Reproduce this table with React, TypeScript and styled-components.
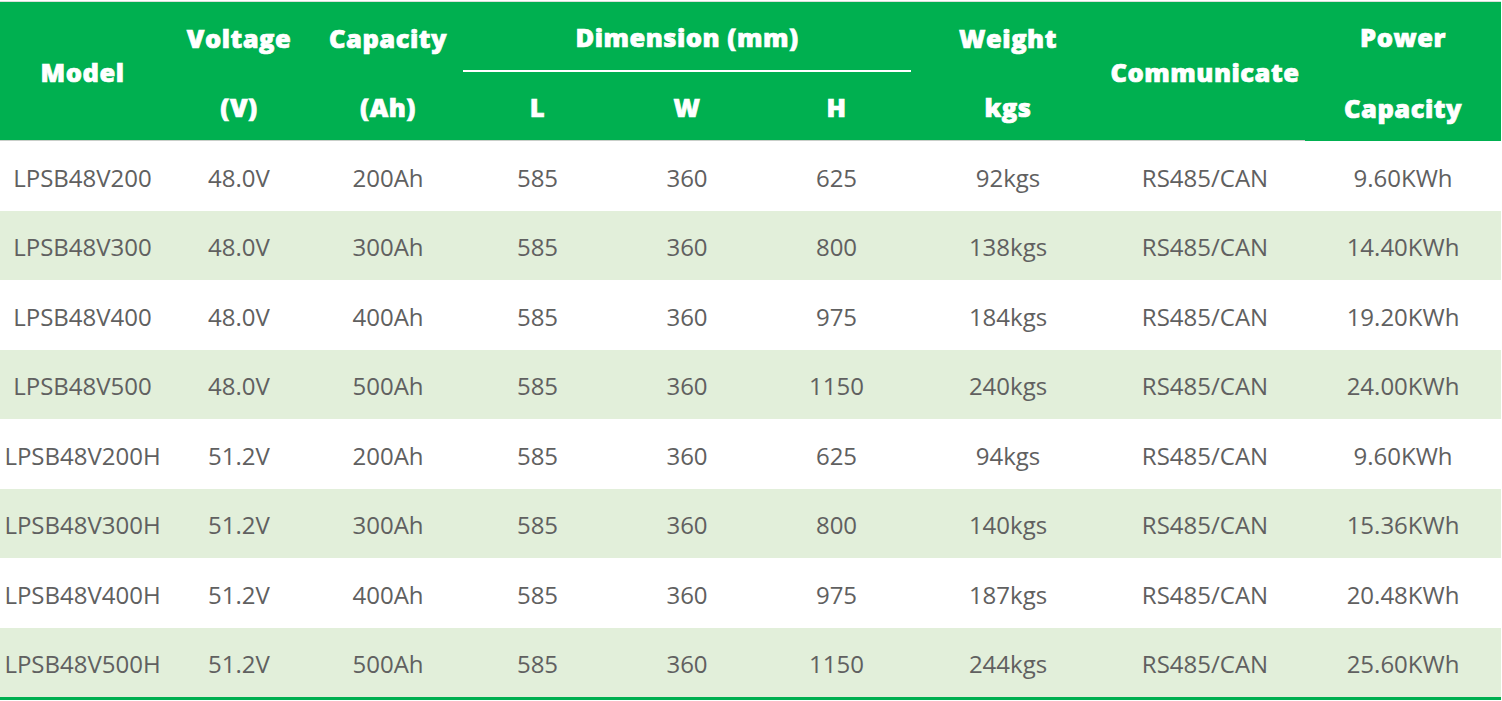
import styled, { createGlobalStyle } from 'styled-components';

const GlobalStyle = createGlobalStyle`
	html,
	body {
		margin: 0;
		padding: 0;
		background: #ffffff;
	}
`;

type Row = {
	model: string;
	voltage: string;
	capacity: string;
	l: number;
	w: number;
	h: number;
	weight: string;
	comm: string;
	power: string;
};

const rows: Row[] = [
	{ model: 'LPSB48V200', voltage: '48.0V', capacity: '200Ah', l: 585, w: 360, h: 625, weight: '92kgs', comm: 'RS485/CAN', power: '9.60KWh' },
	{ model: 'LPSB48V300', voltage: '48.0V', capacity: '300Ah', l: 585, w: 360, h: 800, weight: '138kgs', comm: 'RS485/CAN', power: '14.40KWh' },
	{ model: 'LPSB48V400', voltage: '48.0V', capacity: '400Ah', l: 585, w: 360, h: 975, weight: '184kgs', comm: 'RS485/CAN', power: '19.20KWh' },
	{ model: 'LPSB48V500', voltage: '48.0V', capacity: '500Ah', l: 585, w: 360, h: 1150, weight: '240kgs', comm: 'RS485/CAN', power: '24.00KWh' },
	{ model: 'LPSB48V200H', voltage: '51.2V', capacity: '200Ah', l: 585, w: 360, h: 625, weight: '94kgs', comm: 'RS485/CAN', power: '9.60KWh' },
	{ model: 'LPSB48V300H', voltage: '51.2V', capacity: '300Ah', l: 585, w: 360, h: 800, weight: '140kgs', comm: 'RS485/CAN', power: '15.36KWh' },
	{ model: 'LPSB48V400H', voltage: '51.2V', capacity: '400Ah', l: 585, w: 360, h: 975, weight: '187kgs', comm: 'RS485/CAN', power: '20.48KWh' },
	{ model: 'LPSB48V500H', voltage: '51.2V', capacity: '500Ah', l: 585, w: 360, h: 1150, weight: '244kgs', comm: 'RS485/CAN', power: '25.60KWh' },
];

// column widths measured off the sheet, left to right
const widths = [165, 148, 150, 149, 150, 149, 194, 200, 196];

export default function App(): JSX.Element {
	return (
		<Wrapper>
			<GlobalStyle />
			<SpecTable>
				<colgroup>
					{widths.map((w, i) => (
						<Col key={i} $w={w} />
					))}
				</colgroup>
				<thead>
					<HeadRow>
						<Head rowSpan={2} $underlined>
							Model
						</Head>
						<Head>Voltage</Head>
						<Head>Capacity</Head>
						<Head colSpan={3} $ruled>
							Dimension (mm)
						</Head>
						<Head>Weight</Head>
						<Head rowSpan={2} $underlined>
							Communicate
						</Head>
						<Head rowSpan={2}>
							Power
							<SecondLine>Capacity</SecondLine>
						</Head>
					</HeadRow>
					<HeadRow $lower>
						<Head $underlined>(V)</Head>
						<Head $underlined>(Ah)</Head>
						<Head $underlined>L</Head>
						<Head $underlined>W</Head>
						<Head $underlined>H</Head>
						<Head $underlined>kgs</Head>
					</HeadRow>
				</thead>
				<tbody>
					{rows.map((r) => (
						<BodyRow key={r.model}>
							<Cell>{r.model}</Cell>
							<Cell>{r.voltage}</Cell>
							<Cell>{r.capacity}</Cell>
							<Cell>{r.l}</Cell>
							<Cell>{r.w}</Cell>
							<Cell>{r.h}</Cell>
							<Cell>{r.weight}</Cell>
							<Cell>{r.comm}</Cell>
							<Cell>{r.power}</Cell>
						</BodyRow>
					))}
				</tbody>
			</SpecTable>
		</Wrapper>
	);
}

const Wrapper = styled.div`
	width: 1502px;
	padding-top: 1px;
`;

const SpecTable = styled.table`
	table-layout: fixed;
	width: 1501px;
	border-collapse: separate;
	border-spacing: 0;
	border-top: 1px solid #dadfda;
	border-bottom: 3px solid #00b050;
`;

const Col = styled.col<{ $w: number }>`
	width: ${(p) => p.$w}px;
`;

const HeadRow = styled.tr<{ $lower?: boolean }>`
	height: ${(p) => (p.$lower ? '69px' : '70px')};
	background: #00b050;
`;

const Head = styled.th<{ $ruled?: boolean; $underlined?: boolean }>`
	padding: 4px 0 0;
	text-align: center;
	vertical-align: middle;
	color: #ffffff;
	font-family: 'Open Sans', Lato, sans-serif;
	font-weight: 800;
	font-size: 25.5px;
	letter-spacing: 0.5px;
	-webkit-text-stroke: 0.7px #ffffff;
	line-height: 1;
	white-space: nowrap;
	background: #00b050;
	border-bottom: ${(p) =>
		p.$ruled ? '2px solid #ffffff' : p.$underlined ? '1px solid #c9cfc9' : '1px solid #00b050'};
`;

const SecondLine = styled.span`
	display: block;
	margin-top: 45px;
`;

const BodyRow = styled.tr`
	height: 69.5px;

	&:nth-child(even) {
		background: #e2efda;
	}
`;

const Cell = styled.td`
	padding: 4px 0 0;
	text-align: center;
	vertical-align: middle;
	color: #606060;
	font-family: 'Open Sans', 'Noto Sans', sans-serif;
	font-size: 24px;
	line-height: 1;
	white-space: nowrap;
`;
